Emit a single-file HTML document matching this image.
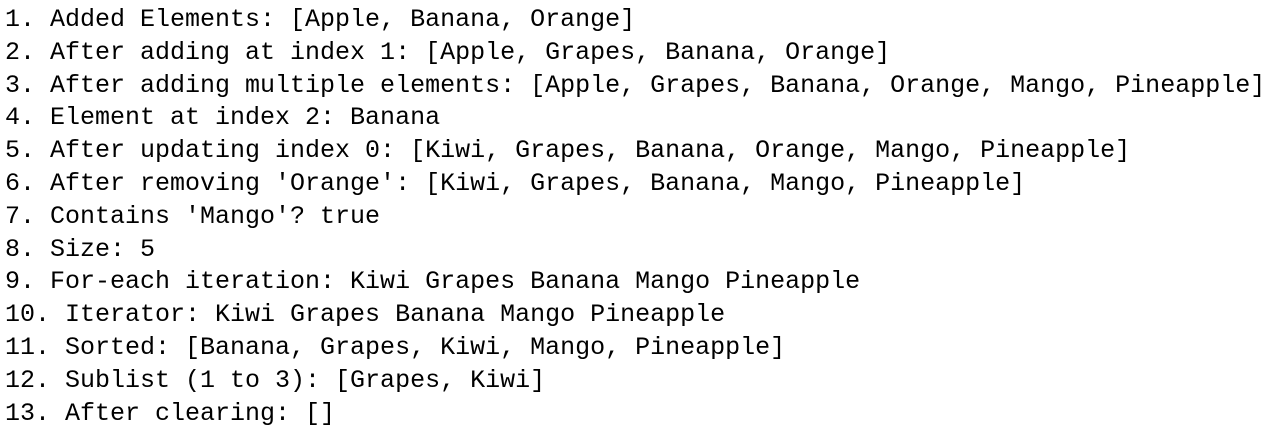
<!DOCTYPE html>
<html><head><meta charset="utf-8"><style>
html,body{margin:0;padding:0;background:#fff;width:1277px;height:447px;overflow:hidden}
pre{margin:0;position:absolute;left:5px;top:4px;font-family:"Liberation Mono",monospace;font-size:25px;line-height:32.8px;color:#000}
</style></head><body><pre>1. Added Elements: [Apple, Banana, Orange]
2. After adding at index 1: [Apple, Grapes, Banana, Orange]
3. After adding multiple elements: [Apple, Grapes, Banana, Orange, Mango, Pineapple]
4. Element at index 2: Banana
5. After updating index 0: [Kiwi, Grapes, Banana, Orange, Mango, Pineapple]
6. After removing 'Orange': [Kiwi, Grapes, Banana, Mango, Pineapple]
7. Contains 'Mango'? true
8. Size: 5
9. For-each iteration: Kiwi Grapes Banana Mango Pineapple
10. Iterator: Kiwi Grapes Banana Mango Pineapple
11. Sorted: [Banana, Grapes, Kiwi, Mango, Pineapple]
12. Sublist (1 to 3): [Grapes, Kiwi]
13. After clearing: []</pre></body></html>
